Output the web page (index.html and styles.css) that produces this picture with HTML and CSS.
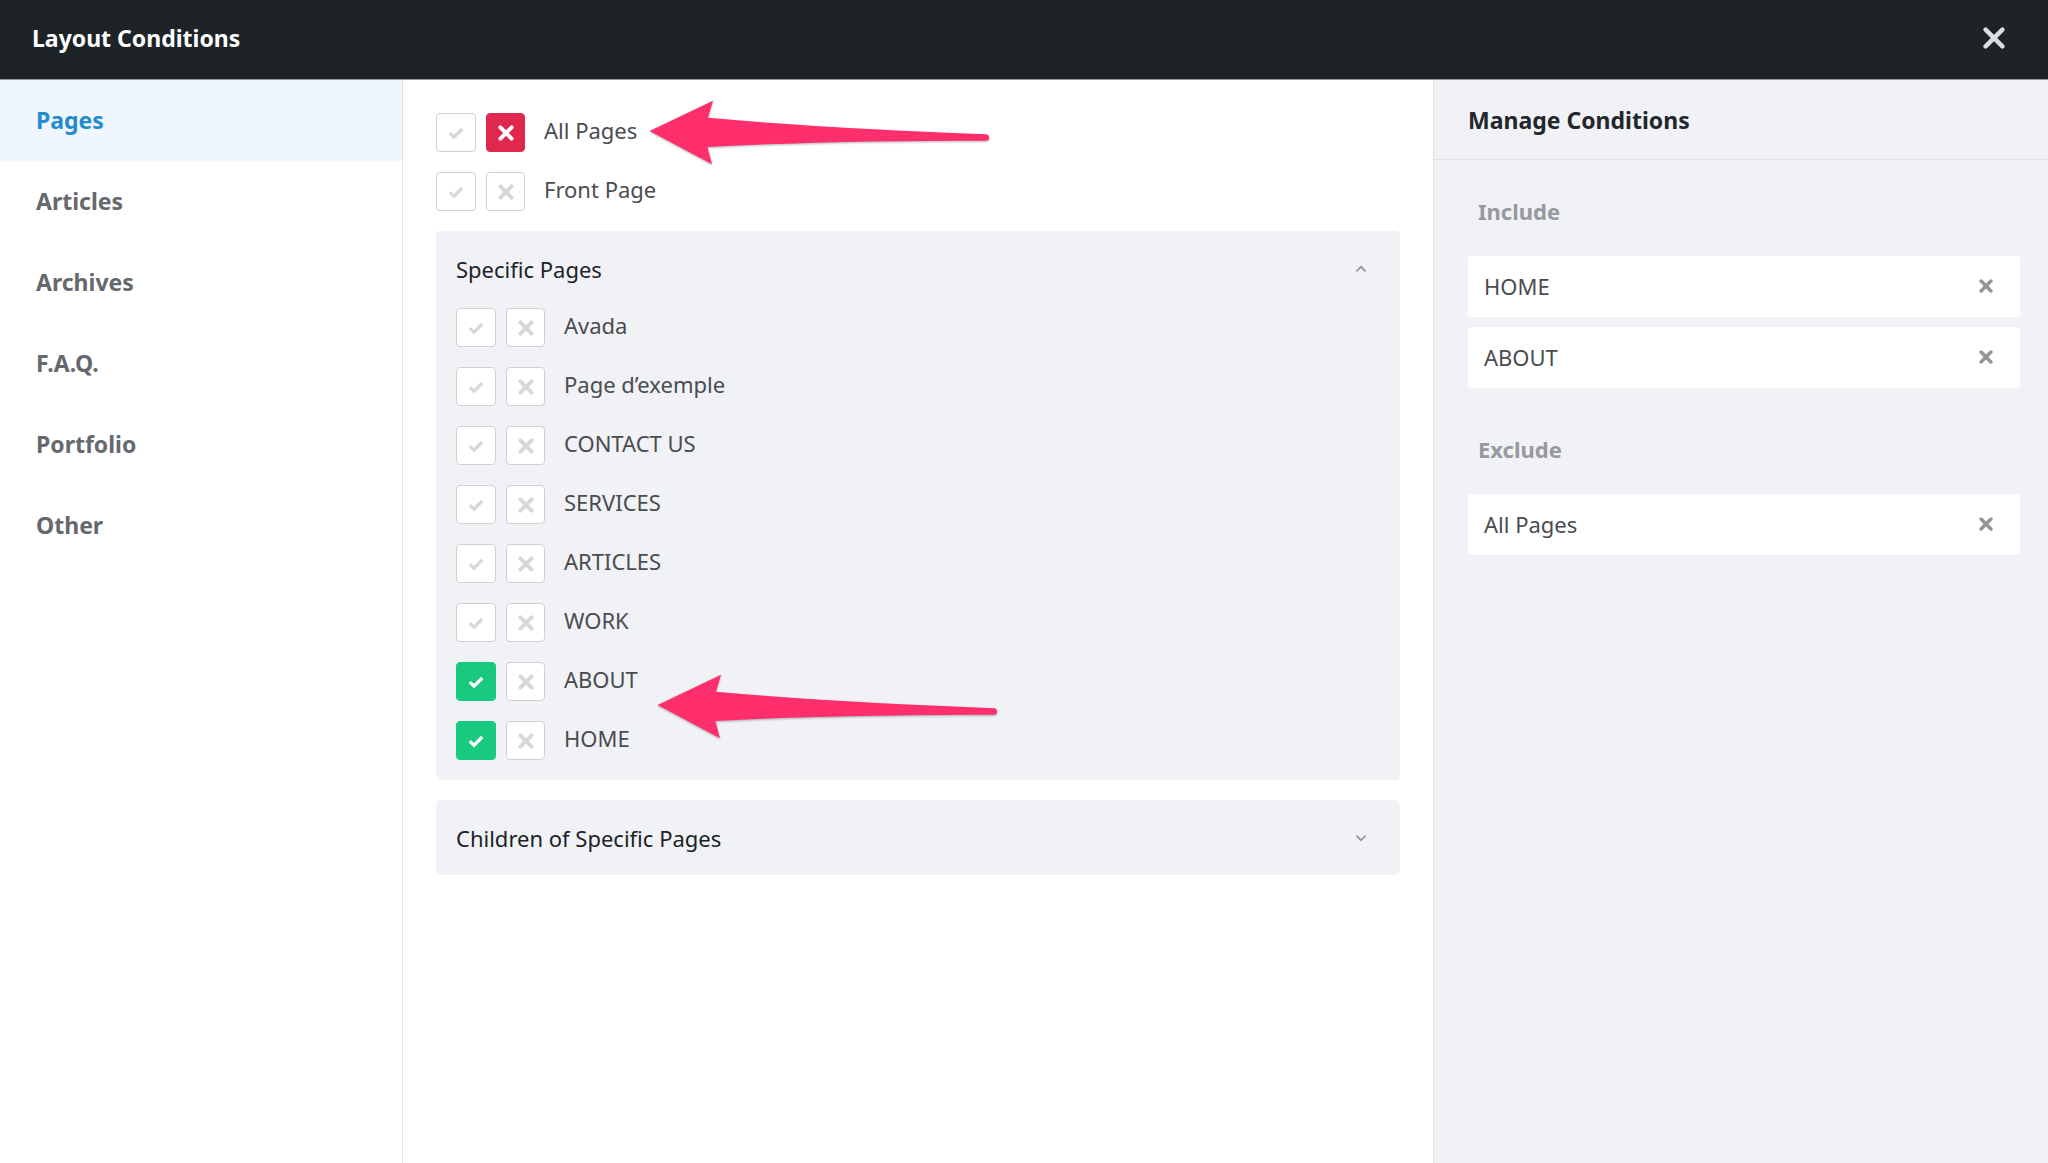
FILE: index.html
```html
<!DOCTYPE html>
<html lang="en">
<head>
    <meta charset="UTF-8">
    <meta name="viewport" content="width=device-width, initial-scale=1.0">
    <title>Layout Conditions</title>
    <link rel="stylesheet" href="styles.css">
</head>
<body>

    <!-- shared icons -->
    <svg class="sprite" aria-hidden="true">
        <symbol id="check" viewBox="0 0 16 16"><path d="M1.8 8.2L6 12.2L14.2 4" fill="none" stroke="currentColor" stroke-width="3.2"/></symbol>
        <symbol id="cross" viewBox="0 0 16 16"><path d="M2.4 2.4L13.6 13.6M13.6 2.4L2.4 13.6" fill="none" stroke="currentColor" stroke-width="4" stroke-linecap="round"/></symbol>
        <symbol id="close" viewBox="0 0 22 22"><path d="M2.6 2.6L19.4 19.4M19.4 2.6L2.6 19.4" fill="none" stroke="currentColor" stroke-width="4.4" stroke-linecap="round"/></symbol>
        <symbol id="chevron" viewBox="0 0 12 8"><path d="M1.4 1.6L6 6.2L10.6 1.6" fill="none" stroke="currentColor" stroke-width="1.8"/></symbol>
        <symbol id="arrow" viewBox="0 0 345 70"><path d="M1.6 33L65 2.7L60 19.7C150 28 250 33 338 36.2Q341 36.4 341 39.4Q341 42.6 338 42.7C250 42.8 150 44 59.4 49L64 66.3Z" fill="currentColor"/></symbol>
    </svg>

    <header class="header">
        <h1>Layout Conditions</h1>
        <button class="close" type="button" aria-label="Close"><svg><use href="#close"/></svg></button>
    </header>

    <div class="layout">
        <nav class="sidebar">
            <a class="active" href="#">Pages</a>
            <a href="#">Articles</a>
            <a href="#">Archives</a>
            <a href="#">F.A.Q.</a>
            <a href="#">Portfolio</a>
            <a href="#">Other</a>
        </nav>

        <main class="content">
            <div class="conditions">
                <div class="condition">
                    <span class="toggle include"><input type="checkbox" id="all-pages" aria-label="Include All Pages"><svg><use href="#check"/></svg></span>
                    <span class="toggle exclude"><input type="checkbox" aria-label="Exclude All Pages" checked><svg><use href="#cross"/></svg></span>
                    <label for="all-pages">All Pages</label>
                </div>
                <div class="condition">
                    <span class="toggle include"><input type="checkbox" id="front-page" aria-label="Include Front Page"><svg><use href="#check"/></svg></span>
                    <span class="toggle exclude"><input type="checkbox" aria-label="Exclude Front Page"><svg><use href="#cross"/></svg></span>
                    <label for="front-page">Front Page</label>
                </div>
            </div>

            <section class="group open">
                <button class="group-title" type="button" aria-expanded="true">Specific Pages <svg><use href="#chevron"/></svg></button>
                <div class="conditions">
                    <div class="condition">
                        <span class="toggle include"><input type="checkbox" id="avada" aria-label="Include Avada"><svg><use href="#check"/></svg></span>
                        <span class="toggle exclude"><input type="checkbox" aria-label="Exclude Avada"><svg><use href="#cross"/></svg></span>
                        <label for="avada">Avada</label>
                    </div>
                    <div class="condition">
                        <span class="toggle include"><input type="checkbox" id="exemple" aria-label="Include Page d’exemple"><svg><use href="#check"/></svg></span>
                        <span class="toggle exclude"><input type="checkbox" aria-label="Exclude Page d’exemple"><svg><use href="#cross"/></svg></span>
                        <label for="exemple">Page d’exemple</label>
                    </div>
                    <div class="condition">
                        <span class="toggle include"><input type="checkbox" id="contact" aria-label="Include CONTACT US"><svg><use href="#check"/></svg></span>
                        <span class="toggle exclude"><input type="checkbox" aria-label="Exclude CONTACT US"><svg><use href="#cross"/></svg></span>
                        <label for="contact">CONTACT US</label>
                    </div>
                    <div class="condition">
                        <span class="toggle include"><input type="checkbox" id="services" aria-label="Include SERVICES"><svg><use href="#check"/></svg></span>
                        <span class="toggle exclude"><input type="checkbox" aria-label="Exclude SERVICES"><svg><use href="#cross"/></svg></span>
                        <label for="services">SERVICES</label>
                    </div>
                    <div class="condition">
                        <span class="toggle include"><input type="checkbox" id="articles" aria-label="Include ARTICLES"><svg><use href="#check"/></svg></span>
                        <span class="toggle exclude"><input type="checkbox" aria-label="Exclude ARTICLES"><svg><use href="#cross"/></svg></span>
                        <label for="articles">ARTICLES</label>
                    </div>
                    <div class="condition">
                        <span class="toggle include"><input type="checkbox" id="work" aria-label="Include WORK"><svg><use href="#check"/></svg></span>
                        <span class="toggle exclude"><input type="checkbox" aria-label="Exclude WORK"><svg><use href="#cross"/></svg></span>
                        <label for="work">WORK</label>
                    </div>
                    <div class="condition">
                        <span class="toggle include"><input type="checkbox" id="about" aria-label="Include ABOUT" checked><svg><use href="#check"/></svg></span>
                        <span class="toggle exclude"><input type="checkbox" aria-label="Exclude ABOUT"><svg><use href="#cross"/></svg></span>
                        <label for="about">ABOUT</label>
                    </div>
                    <div class="condition">
                        <span class="toggle include"><input type="checkbox" id="home" aria-label="Include HOME" checked><svg><use href="#check"/></svg></span>
                        <span class="toggle exclude"><input type="checkbox" aria-label="Exclude HOME"><svg><use href="#cross"/></svg></span>
                        <label for="home">HOME</label>
                    </div>
                </div>
            </section>

            <section class="group">
                <button class="group-title" type="button" aria-expanded="false">Children of Specific Pages <svg><use href="#chevron"/></svg></button>
            </section>

            <!-- annotations -->
            <svg class="arrow arrow-all" aria-hidden="true"><use href="#arrow"/></svg>
            <svg class="arrow arrow-about" aria-hidden="true"><use href="#arrow"/></svg>
        </main>

        <aside class="manage">
            <h2>Manage Conditions</h2>
            <section class="selected">
                <h3>Include</h3>
                <ul>
                    <li>HOME <button type="button" aria-label="Remove HOME"><svg><use href="#cross"/></svg></button></li>
                    <li>ABOUT <button type="button" aria-label="Remove ABOUT"><svg><use href="#cross"/></svg></button></li>
                </ul>
            </section>
            <section class="selected">
                <h3>Exclude</h3>
                <ul>
                    <li>All Pages <button type="button" aria-label="Remove All Pages"><svg><use href="#cross"/></svg></button></li>
                </ul>
            </section>
        </aside>
    </div>

</body>
</html>
```
FILE: styles.css
```css
* {
    box-sizing: border-box;
}
body {
    display: flex;
    flex-direction: column;
    min-height: 100vh;
    margin: 0;
    background: #fff;
    color: #4a4c50;
    font-family: "Noto Sans", sans-serif;
    font-size: 22px;
    line-height: 30px;
}
h1, h2, h3, ul {
    margin: 0;
    padding: 0;
}
button {
    padding: 0;
    border: 0;
    background: none;
    font: inherit;
    cursor: pointer;
}
svg {
    display: block;
}
.sprite {
    position: absolute;
    width: 0;
    height: 0;
}

/* Header */
.header {
    display: flex;
    align-items: center;
    justify-content: space-between;
    height: 80px;
    padding: 0 43px 3px 32px;
    background: #1d2327;
    border-bottom: 1px solid #94979a;
}
.header h1 {
    color: #fff;
    font-size: 23px;
    font-weight: 700;
}
.close {
    color: #dcdddf;
}
.close svg {
    width: 22px;
    height: 22px;
}

.layout {
    display: grid;
    flex: 1;
    grid-template-columns: 403px 1fr 615px;
}

/* Sidebar */
.sidebar {
    border-right: 1px solid #dfe1e4;
}
.sidebar a {
    display: flex;
    align-items: center;
    height: 81px;
    padding: 0 0 2px 36px;
    color: #65686c;
    font-size: 23px;
    font-weight: 700;
    text-decoration: none;
}
.sidebar a.active {
    background: #f0f6fe;
    color: #238ccf;
}

/* Conditions */
.content {
    position: relative;
    padding: 33px;
}
.conditions {
    display: grid;
    gap: 20px;
}
.condition {
    display: flex;
    align-items: center;
    gap: 10px;
    height: 39px;
}
.condition label {
    margin-left: 9px;
    padding-bottom: 5px;
}
.toggle {
    display: grid;
    place-items: center;
    width: 39px;
    height: 39px;
    color: #d7d8da;
}
.toggle.include {
    width: 40px;
}
.toggle > * {
    grid-area: 1 / 1;
}
.toggle svg {
    z-index: 1;
    width: 16px;
    height: 16px;
    pointer-events: none;
}
.toggle input {
    width: 100%;
    height: 100%;
    margin: 0;
    appearance: none;
    background: #fff;
    border: 1px solid #d0d1d3;
    border-radius: 4px;
    cursor: pointer;
}
.toggle input:checked + svg {
    color: #fff;
}
.include input:checked {
    background: #18c97f;
    border-color: #18c97f;
}
.exclude input:checked {
    background: #e0284f;
    border-color: #e0284f;
}

.group {
    margin-top: 20px;
    background: #f0f2f5;
    border-radius: 5px;
}
.group .conditions {
    padding: 2px 20px 20px;
}
.group-title {
    display: flex;
    align-items: center;
    justify-content: space-between;
    width: 100%;
    height: 75px;
    padding: 0 33px 0 20px;
    color: #202227;
}
.group-title svg {
    width: 12px;
    height: 8px;
    color: #95989d;
}
.open .group-title svg {
    transform: rotate(180deg);
}

.arrow {
    position: absolute;
    width: 345px;
    height: 70px;
    color: #ff2e6c;
    filter: drop-shadow(0 1px 1px rgba(0, 0, 0, 0.3));
    pointer-events: none;
}
.arrow-all {
    top: 18px;
    left: 245px;
}
.arrow-about {
    top: 592px;
    left: 253px;
}

/* Manage panel */
.manage {
    background: #f0f2f5;
    border-left: 1px solid #dfe1e4;
}
.manage h2 {
    height: 80px;
    padding: 25px 34px;
    border-bottom: 1px solid #dfe1e4;
    color: #23262b;
    font-size: 23px;
}
.selected {
    padding: 36px 28px 10px 34px;
}
.selected h3 {
    padding-left: 10px;
    color: #96999d;
    font-size: 22px;
}
.selected ul {
    display: grid;
    gap: 10px;
    margin-top: 30px;
    list-style: none;
}
.selected li {
    display: flex;
    align-items: center;
    justify-content: space-between;
    height: 61px;
    padding: 0 27px 1px 16px;
    background: #fff;
    border-radius: 4px;
}
.selected li button {
    color: #92969b;
}
.selected li svg {
    width: 14px;
    height: 14px;
}
```
